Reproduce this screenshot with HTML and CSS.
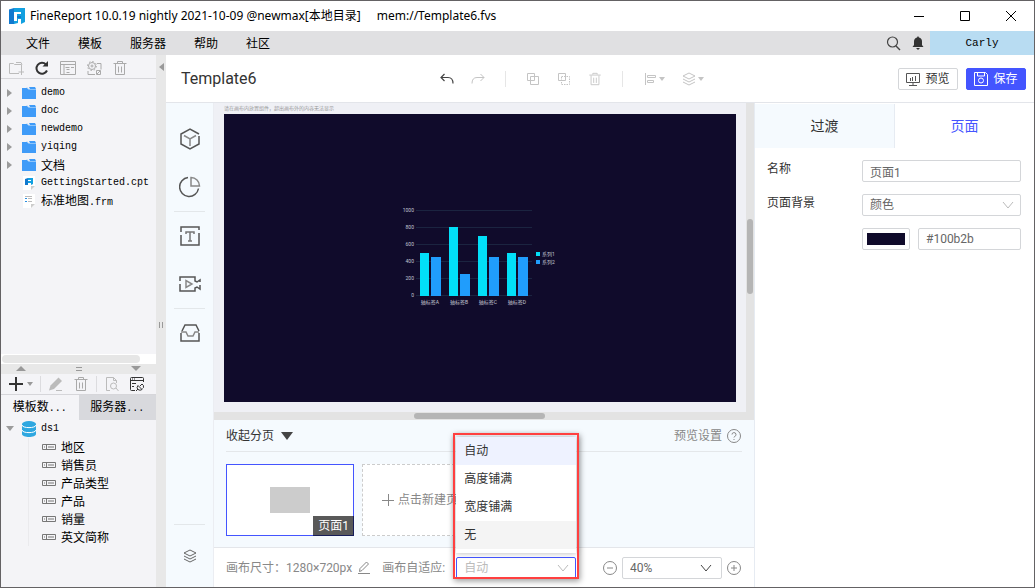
FILE: index.html
```html
<!DOCTYPE html>
<html lang="zh-CN">
<head>
    <meta charset="UTF-8">
    <meta name="viewport" content="width=device-width, initial-scale=1.0">
    <title>FineReport - Template6</title>
    <link rel="stylesheet" href="styles.css">
</head>
<body>
    <svg width="0" height="0" class="symbols" aria-hidden="true">
        <symbol id="folder" viewBox="0 0 14 12"><path d="M0 1h5l1 1h8v10H0z" fill="#3f9bf8"/><path d="M7 0h6l1 2H8z" fill="#3f9bf8"/><path d="M5 .5l1.500 2H14" fill="none" stroke="#8cc4fb"/></symbol>
        <symbol id="arrow" viewBox="0 0 5 8"><path d="M0 0l5 4-5 4z" fill="#9b9b9b"/></symbol>
        <symbol id="caret" viewBox="0 0 6 4"><path d="M0 0h6L3 4z" fill="currentColor"/></symbol>
        <symbol id="field" viewBox="0 0 14 6"><path d="M.5.5h13v5H.5zM4.500 .5v5M6 3h6M2 3h1" fill="none" stroke="#777"/></symbol>
        <symbol id="trash" viewBox="0 0 16 16"><path d="M1.500 3.500h13M5.500 3V1.500h5V3M3.500 4v10.500h9V4M6.500 6.500v6M9.500 6.500v6" fill="none" stroke="currentColor"/></symbol>
        <symbol id="layers" viewBox="0 0 14 14"><path d="M7 1l6 3-6 3-6-3zM1 7l6 3 6-3M1 10l6 3 6-3" fill="none" stroke="currentColor"/></symbol>
        <symbol id="chevron" viewBox="0 0 12 8"><path d="M1 1l5 6 5-6" fill="none" stroke="currentColor"/></symbol>
    </svg>
    <div class="window">
        <header class="titlebar">
            <svg class="logo" width="16" height="16" viewBox="0 0 16 16"><path d="M0 1.500L5 0v16H0z" fill="#1279cf"/><path d="M5 0h11v14l-4 2v-5H9v4l-4 1z" fill="#12a0e0"/><path d="M5 4h7v2H8v2h4v2H8v3H5z" fill="#fff"/><path d="M8 8h4v2H8z" fill="#1279cf"/></svg>
            <h1>FineReport 10.0.19 nightly 2021-10-09 @newmax[本地目录]</h1>
            <span class="path">mem://Template6.fvs</span>
            <div class="win-buttons">
                <button aria-label="最小化"><svg width="12" height="12"><path d="M1 6.500h10" stroke="#000"/></svg></button>
                <button aria-label="最大化"><svg width="12" height="12"><path d="M1.500 1.500h9v9h-9z" fill="none" stroke="#000"/></svg></button>
                <button aria-label="关闭"><svg width="12" height="12"><path d="M1 1l10 10M11 1L1 11" stroke="#000"/></svg></button>
            </div>
        </header>
        <nav class="menubar">
            <button>文件</button>
            <button>模板</button>
            <button>服务器</button>
            <button>帮助</button>
            <button>社区</button>
            <div class="menu-right">
                <button aria-label="搜索"><svg width="15" height="15" viewBox="0 0 15 15"><g fill="none" stroke="#444"><circle cx="6.500" cy="6" r="5" stroke-width="1.200"/><path d="M10 10l4 4" stroke-width="1.500"/></g></svg></button>
                <button aria-label="通知"><svg width="12" height="14" viewBox="0 0 12 14"><path d="M6 0l1 1.500c2 .5 3 2 3 4V9l1.500 2H.5L2 9V5.500c0-2 1-3.500 3-4zM4 12h4l-2 2z" fill="#333"/></svg></button>
                <button class="user">Carly</button>
            </div>
        </nav>

        <div class="workspace">
            <aside class="sidebar">
                <section class="files">
                    <div class="side-tools">
                        <button aria-label="新建文件夹"><svg width="16" height="16" viewBox="0 0 16 16"><path d="M11 13.500H1.500v-10h4l1 1h7V9M8 2.500h5l1 2M13.500 9v6M10.500 12h6" fill="none" stroke="#bbb"/></svg></button>
                        <button aria-label="刷新"><svg width="16" height="16" viewBox="0 0 16 16"><path d="M13 10.500A5.500 5.500 0 1 1 12 4.500" fill="none" stroke="#333" stroke-width="2"/><path d="M14 1v5.500H8.500z" fill="#333"/></svg></button>
                        <button aria-label="模板"><svg width="16" height="16" viewBox="0 0 16 16"><path d="M.5 1.500h15v13H.5zM.5 4.500h15M4 5v9M5.500 7.500h4M6.500 9.500h3M6.500 12.500h3M11 7.500h3" fill="none" stroke="#aaa"/></svg></button>
                        <button aria-label="设置"><svg width="16" height="16" viewBox="0 0 16 16"><g fill="none" stroke="#aaa"><circle cx="6" cy="6" r="3.500"/><circle cx="6" cy="6" r="4.500" stroke-dasharray="1.500 2"/><circle cx="6" cy="6" r="1"/><path d="M11 3.500h4v6M2 11v3.500h7M10.500 10.500h4v4h-4zM11 14l3-3"/></g></svg></button>
                        <button aria-label="删除" class="dim"><svg width="16" height="16"><use href="#trash"/></svg></button>
                    </div>
                    <ul class="tree">
                        <li><svg class="mark" width="5" height="8"><use href="#arrow"/></svg><svg width="14" height="12"><use href="#folder"/></svg>demo</li>
                        <li><svg class="mark" width="5" height="8"><use href="#arrow"/></svg><svg width="14" height="12"><use href="#folder"/></svg>doc</li>
                        <li><svg class="mark" width="5" height="8"><use href="#arrow"/></svg><svg width="14" height="12"><use href="#folder"/></svg>newdemo</li>
                        <li><svg class="mark" width="5" height="8"><use href="#arrow"/></svg><svg width="14" height="12"><use href="#folder"/></svg>yiqing</li>
                        <li><svg class="mark" width="5" height="8"><use href="#arrow"/></svg><svg width="14" height="12"><use href="#folder"/></svg><span class="cn">文档</span></li>
                        <li><i class="mark"></i><svg width="14" height="14" viewBox="0 0 14 14"><path d="M1 0h12v10l-4 4H1z" fill="#fff"/><path d="M13 10H9v4z" fill="#ccc"/><path d="M3 3l3-1v7H3z" fill="#1279cf"/><path d="M6 2h5v6l-2 1V7H6z" fill="#12a0e0"/><path d="M6 4h3v1H6z" fill="#fff"/></svg>GettingStarted.cpt</li>
                        <li><i class="mark"></i><svg width="14" height="14" viewBox="0 0 14 14"><path d="M1 0h12v10l-4 4H1z" fill="#fff"/><path d="M13 10H9v4z" fill="#ccc"/><path d="M3 2.500h7M6 4.500h4M6 7.500h4" stroke="#bbb"/><path d="M3 4h2v1H3zM3 7h2v1H3z" fill="#2a8fe0"/></svg><span><span class="cn">标准地图</span>.frm</span></li>
                    </ul>
                    <div class="side-scroll"><div class="side-thumb"></div></div>
                </section>
                <section class="datasets">
                    <div class="side-split">
                        <svg width="10" height="5"><path d="M0 5l5-5 5 5z" fill="#999"/></svg>
                        <svg width="6" height="4"><path d="M0 .5h6M0 3.500h6" stroke="#999"/></svg>
                        <svg width="10" height="5"><path d="M0 0h10L5 5z" fill="#999"/></svg>
                    </div>
                    <div class="side-tools data-tools">
                        <button class="add" aria-label="添加"><svg width="14" height="14"><path d="M7 0v14M0 7h14" stroke="#333" stroke-width="2"/></svg><svg width="6" height="4"><use href="#caret"/></svg></button>
                        <i class="sep"></i>
                        <button aria-label="编辑"><svg width="16" height="16" viewBox="0 0 16 16"><path d="M1 14.500l1.500-5L10.500 1.500l3.500 3.500-8 8z" fill="#bbb"/><path d="M8 14.500h6" stroke="#bbb"/></svg></button>
                        <button aria-label="删除" class="dim"><svg width="16" height="16"><use href="#trash"/></svg></button>
                        <i class="sep"></i>
                        <button aria-label="预览"><svg width="16" height="16" viewBox="0 0 16 16"><g fill="none" stroke="#bbb"><path d="M6 14.500H2.500v-13h7l3 3V7M9.500 1.500v3h3"/><circle cx="9.500" cy="10" r="3"/><path d="M12 12l2.500 3"/></g></svg></button>
                        <button aria-label="连接管理"><svg width="16" height="16" viewBox="0 0 16 16"><g fill="none" stroke="#333"><path d="M6 14.500H2.500q-1 0-1-1v-11q0-1 1-1h11q1 0 1 1V6M1.500 4.500h13M3 3h1M5 3h1M3 7.500h4M3 10.500h2"/><path d="M7 15l2-2M9 9.500l4 4q-2 1.500-4 0t0-4M11 10l2-2q2 1 1.500 3.500l-1 1"/></g></svg></button>
                    </div>
                    <div class="side-tabs">
                        <button class="active"><span>模板数<b>...</b></span></button>
                        <button><span>服务器<b>...</b></span></button>
                    </div>
                    <ul class="tree data-tree">
                        <li><svg class="mark" width="8" height="5" viewBox="0 0 8 5"><path d="M0 0h8L4 5z" fill="#9b9b9b"/></svg><svg width="14" height="16" viewBox="0 0 14 16"><path d="M0 3v10c0 4 14 4 14 0V3z" fill="#2ea7e0"/><ellipse cx="7" cy="3" rx="7" ry="3" fill="#2ea7e0"/><path d="M0 4c0 3.500 14 3.500 14 0M0 9c0 3.500 14 3.500 14 0" fill="none" stroke="#fff"/></svg>ds1</li>
                    </ul>
                    <ul class="tree columns">
                        <li><svg width="14" height="6"><use href="#field"/></svg><span class="cn">地区</span></li>
                        <li><svg width="14" height="6"><use href="#field"/></svg><span class="cn">销售员</span></li>
                        <li><svg width="14" height="6"><use href="#field"/></svg><span class="cn">产品类型</span></li>
                        <li><svg width="14" height="6"><use href="#field"/></svg><span class="cn">产品</span></li>
                        <li><svg width="14" height="6"><use href="#field"/></svg><span class="cn">销量</span></li>
                        <li><svg width="14" height="6"><use href="#field"/></svg><span class="cn">英文简称</span></li>
                    </ul>
                </section>
            </aside>
            <div class="splitter">
                <svg width="5" height="8"><path d="M5 0v8L0 4z" fill="#999"/></svg>
                <svg class="grip" width="4" height="6"><path d="M.5 0v6M3.500 0v6" stroke="#999"/></svg>
            </div>

            <main class="designer">
                <header class="designer-head">
                    <h2>Template6</h2>
                    <div class="tools">
                        <button class="on" aria-label="撤销"><svg width="16" height="16" viewBox="0 0 16 16"><path d="M5.500 3L2 6.500 5.500 10M2 6.500h7q5 0 5 6" fill="none" stroke="currentColor" stroke-width="1.200"/></svg></button>
                        <button aria-label="重做"><svg width="16" height="16" viewBox="0 0 16 16"><path d="M10.500 3L14 6.500 10.500 10M14 6.500H7q-5 0-5 6" fill="none" stroke="currentColor"/></svg></button>
                        <i class="sep"></i>
                        <button aria-label="复制"><svg width="16" height="16" viewBox="0 0 16 16"><path d="M2.500 2.500h7v7h-7zM5.500 5.500h8v8h-8z" fill="none" stroke="currentColor"/></svg></button>
                        <button aria-label="粘贴"><svg width="16" height="16" viewBox="0 0 16 16"><path d="M2.500 2.500h7v7h-7z" fill="none" stroke="currentColor"/><path d="M5.500 5.500h8v8h-8z" fill="none" stroke="currentColor" stroke-dasharray="1.500 1"/></svg></button>
                        <button aria-label="删除"><svg width="14" height="14"><use href="#trash"/></svg></button>
                        <i class="sep"></i>
                        <button class="wide" aria-label="对齐"><svg width="14" height="14" viewBox="0 0 14 14"><path d="M2.500 1v12M4.500 3.500h8v2h-8zM4.500 8.500h6v2h-6z" fill="none" stroke="currentColor"/></svg><svg width="6" height="4"><use href="#caret"/></svg></button>
                        <button class="wide" aria-label="层级"><svg width="14" height="14"><use href="#layers"/></svg><svg width="6" height="4"><use href="#caret"/></svg></button>
                    </div>
                    <div class="actions">
                        <button class="btn"><svg width="14" height="14" viewBox="0 0 14 14"><path d="M.5 1.500h13v9H.5zM7 11v2M3 13.500h8M4.500 6v3M6.500 5v4M9.500 4v5" fill="none" stroke="#555"/></svg>预览</button>
                        <button class="btn primary"><svg width="14" height="14" viewBox="0 0 14 14"><g fill="none" stroke="#fff"><path d="M.5.5h11l2 2v11H.5zM3.500 1v3h7V1"/><circle cx="7" cy="8.500" r="2.500"/></g></svg>保存</button>
                    </div>
                </header>

                <div class="designer-body">
                    <nav class="strip">
                        <button aria-label="组件"><svg width="22" height="22" viewBox="0 0 22 22"><g fill="none" stroke="#555" stroke-width="1.500"><path d="M20 8v8l-9 5-9-5V6l9-5 9 5"/><path d="M5 7.500l6 3.500 6-3.500M11 11v7" stroke="#888"/></g></svg></button>
                        <button aria-label="图表"><svg width="22" height="22" viewBox="0 0 22 22"><g fill="none" stroke-width="1.500"><path d="M9 1.500a9.500 9.500 0 1 0 10.500 11" stroke="#555"/><path d="M12 1.500V10h8.500A8.500 8.500 0 0 0 12 1.500z" stroke="#888"/></g></svg></button>
                        <i class="line"></i>
                        <button aria-label="文本"><svg width="22" height="22" viewBox="0 0 22 22"><g fill="none" stroke-width="1.500"><path d="M2 7V2h18v3M2 10v10h18V8" stroke="#555"/><path d="M7 9V7h8v2M11 7v9M9 16h4" stroke="#777"/></g></svg></button>
                        <button aria-label="媒体"><svg width="22" height="22" viewBox="0 0 22 22"><g fill="none" stroke-width="1.500"><path d="M1 8V4h15v4l2 1 3-2v2M1 11v7h15v-3l2-1 3 2v-4" stroke="#555"/><path d="M7 7.500v7l6-3.500z" stroke="#888"/></g></svg></button>
                        <i class="line"></i>
                        <button aria-label="资源"><svg width="22" height="22" viewBox="0 0 22 22"><g fill="none" stroke-width="1.500"><path d="M3 9l3-6h11l3 6M2 11v8h18v-8" stroke="#555"/><path d="M2 10h5l2 4h5l2-4h4" stroke="#888"/></g></svg></button>
                        <i class="line last"></i>
                        <button class="bottom" aria-label="图层"><svg width="14" height="14"><use href="#layers"/></svg></button>
                    </nav>

                    <section class="center">
                        <div class="viewport">
                            <div class="canvas">
                                <p class="hint">请在画布内放置组件，超出画布外的内容无法显示</p>
                                <svg class="stage" viewBox="0 0 512 288">
                                    <rect width="512" height="288" fill="#100b2b"/>
                                    <path d="M192 96.500h116M192 113.500h116M192 130.500h116M192 147.500h116M192 164.500h116M192 181.500h116" stroke="#1b2440"/>
                                    <g fill="#02dff8">
                                        <rect x="196" y="139" width="9" height="43"/>
                                        <rect x="225" y="113" width="9" height="69"/>
                                        <rect x="254" y="122" width="9" height="60"/>
                                        <rect x="283" y="139" width="9" height="43"/>
                                        <rect x="312" y="138" width="4" height="4"/>
                                    </g>
                                    <g fill="#209dfc">
                                        <rect x="207" y="143" width="10" height="39"/>
                                        <rect x="236" y="160" width="10" height="22"/>
                                        <rect x="265" y="143" width="10" height="39"/>
                                        <rect x="294" y="143" width="10" height="39"/>
                                        <rect x="312" y="146" width="4" height="4"/>
                                    </g>
                                    <g class="axis" text-anchor="end">
                                        <text x="190" y="98">1000</text>
                                        <text x="190" y="115">800</text>
                                        <text x="190" y="132">600</text>
                                        <text x="190" y="149">400</text>
                                        <text x="190" y="166">200</text>
                                        <text x="190" y="183">0</text>
                                    </g>
                                    <g class="axis" text-anchor="middle">
                                        <text x="206" y="190">轴标签A</text>
                                        <text x="235" y="190">轴标签B</text>
                                        <text x="264" y="190">轴标签C</text>
                                        <text x="293" y="190">轴标签D</text>
                                    </g>
                                    <g class="axis">
                                        <text x="318" y="142">系列1</text>
                                        <text x="318" y="150">系列2</text>
                                    </g>
                                </svg>
                            </div>
                            <div class="vscroll"><div class="vthumb"></div></div>
                        </div>
                        <div class="hscroll"><div class="hthumb"></div></div>

                        <div class="pages">
                            <div class="pages-head">
                                <button class="fold">收起分页 <svg width="12" height="8"><path d="M0 0h12L6 8z" fill="#444"/></svg></button>
                                <button class="setting">预览设置 <svg width="16" height="16" viewBox="0 0 16 16"><g fill="none" stroke="#888"><circle cx="8" cy="8" r="6.500"/><path d="M6 6.500a2 2 0 1 1 2.500 2L8 9.500M8 11v1"/></g></svg></button>
                            </div>
                            <div class="cards">
                                <button class="card current"><i class="thumb"></i><span class="tag">页面1</span></button>
                                <button class="card new"><svg width="12" height="12"><path d="M6.500 0v12M0 6.500h12" stroke="#888"/></svg>点击新建页面</button>
                            </div>
                        </div>

                        <footer class="status">
                            <span>画布尺寸：1280×720px</span>
                            <button class="edit" aria-label="编辑尺寸"><svg width="12" height="13" viewBox="0 0 12 13"><path d="M1.500 10.500l.5-3L8.500 1l2 2L4 9.500zM0 12.500h12" fill="none" stroke="#888"/></svg></button>
                            <label for="fit">画布自适应:</label>
                            <div class="select fit">
                                <select id="fit"><option>自动</option><option>高度铺满</option><option>宽度铺满</option><option>无</option></select>
                                <svg width="12" height="8"><use href="#chevron"/></svg>
                                <ul class="menu" role="listbox" aria-label="画布自适应">
                                    <li class="selected" role="option" aria-selected="true">自动</li>
                                    <li role="option">高度铺满</li>
                                    <li role="option">宽度铺满</li>
                                    <li class="hover" role="option">无</li>
                                </ul>
                                <div class="highlight"></div>
                            </div>
                            <div class="zoom">
                                <button aria-label="缩小"><svg width="16" height="16" viewBox="0 0 16 16"><g fill="none" stroke="#888"><circle cx="8" cy="8" r="6.500"/><path d="M5 8h6"/></g></svg></button>
                                <div class="select scale">
                                    <select aria-label="缩放比例"><option>40%</option></select>
                                    <svg width="12" height="8"><use href="#chevron"/></svg>
                                </div>
                                <button aria-label="放大"><svg width="16" height="16" viewBox="0 0 16 16"><g fill="none" stroke="#888"><circle cx="8" cy="8" r="6.500"/><path d="M5 8h6M8 5v6"/></g></svg></button>
                            </div>
                        </footer>
                    </section>

                    <aside class="props">
                        <div class="props-tabs">
                            <button>过渡</button>
                            <button class="active">页面</button>
                        </div>
                        <form class="props-form">
                            <label for="page-name">名称</label>
                            <input id="page-name" type="text" value="页面1">
                            <label for="page-bg">页面背景</label>
                            <div class="select">
                                <select id="page-bg"><option>颜色</option></select>
                                <svg width="12" height="8"><use href="#chevron"/></svg>
                            </div>
                            <div class="color-row">
                                <button type="button" class="swatch" aria-label="选择颜色"><i></i></button>
                                <input type="text" value="#100b2b" aria-label="颜色值">
                            </div>
                        </form>
                    </aside>
                </div>
            </main>
        </div>
    </div>
</body>
</html>
```
FILE: styles.css
```css
* {
    box-sizing: border-box;
}
body {
    margin: 0;
    font-family: Roboto, "Noto Sans CJK SC", sans-serif;
    font-size: 12px;
    line-height: 18px;
    color: #333;
}
h1, h2, p, ul {
    margin: 0;
    padding: 0;
    font-weight: normal;
}
ul {
    list-style: none;
}
button, input, select {
    font: inherit;
    color: inherit;
    margin: 0;
}
button {
    padding: 0;
    border: none;
    background: none;
    display: flex;
    align-items: center;
    justify-content: center;
    cursor: pointer;
    white-space: nowrap;
}
svg {
    display: block;
    flex: none;
}
.symbols {
    position: absolute;
}
.window {
    height: 100vh;
    display: flex;
    flex-direction: column;
    border: 1px solid #646264;
    background: #fff;
}

/* title bar and menu */
.titlebar {
    display: flex;
    align-items: center;
    height: 30px;
    padding: 0 17px 0 8px;
    font-family: "Noto Sans", "Noto Sans CJK SC", sans-serif;
    color: #000;
}
.titlebar h1 {
    font-size: 12px;
    margin: 0 16px 0 5px;
}
.win-buttons {
    display: flex;
    gap: 34px;
    margin-left: auto;
}
.menubar {
    display: flex;
    align-items: center;
    gap: 28px;
    height: 24px;
    padding-left: 25px;
    background: #e0e0e2;
    color: #000;
    font-family: "Noto Sans CJK SC", sans-serif;
}
.menu-right {
    display: flex;
    align-items: center;
    align-self: stretch;
    gap: 11px;
    margin-left: auto;
}
.user {
    align-self: stretch;
    width: 104px;
    margin-left: -5px;
    background: #b8dcf2;
    font-family: "Liberation Mono", monospace;
    font-size: 11px;
}
.workspace {
    flex: 1;
    display: flex;
    min-height: 0;
}

/* left side */
.sidebar {
    flex: 0 0 155px;
    display: flex;
    flex-direction: column;
    background: #f4f4f7;
    color: #000;
}
.files {
    flex: 1;
    display: flex;
    flex-direction: column;
    min-height: 0;
}
.side-tools {
    display: flex;
    align-items: center;
    gap: 10px;
    height: 24px;
    padding: 2px 7px 0;
    border-bottom: 1px solid #d6d6da;
    color: #999;
}
.dim {
    color: #aaa;
}
.tree {
    font-family: "Liberation Mono", "Noto Sans CJK SC", monospace;
    font-size: 10px;
}
.files .tree {
    flex: 1;
    padding-top: 5px;
    overflow: hidden;
}
.tree li {
    display: flex;
    align-items: center;
    gap: 5px;
    height: 18px;
    padding-left: 6px;
    white-space: nowrap;
}
.mark {
    width: 5px;
    margin-right: 5px;
}
.cn {
    font-family: "Noto Sans CJK SC", sans-serif;
    font-size: 12px;
}
.side-scroll {
    height: 10px;
    padding: 1px;
    background: #fff;
}
.side-thumb {
    width: 90%;
    height: 8px;
    border-radius: 4px;
    background: #e6e6e6;
}
.datasets {
    flex: 0 0 42%;
    min-height: 0;
    overflow: hidden;
}
.side-split {
    display: flex;
    align-items: center;
    justify-content: space-between;
    height: 10px;
    padding: 0 15px;
    background: #e8e8e8;
}
.data-tools {
    height: 21px;
    padding: 0 8px;
    gap: 9px;
}
.add {
    gap: 4px;
}
.sep {
    width: 1px;
    height: 16px;
    background: #dcdcdf;
}
.data-tools .sep {
    margin: 0 -2px;
}
.side-tabs {
    display: flex;
    height: 25px;
}
.side-tabs button {
    flex: 1;
    background: #d8d9dd;
    font-family: "Noto Sans CJK SC", sans-serif;
}
.side-tabs .active {
    background: #f4f4f7;
}
.side-tabs b {
    font-family: "Liberation Mono", monospace;
    font-size: 10px;
    font-weight: normal;
}
.data-tree .mark {
    width: 8px;
    margin-right: 3px;
}
.data-tree li {
    padding-left: 5px;
}
.columns {
    margin-left: 27px;
    border-left: 1px solid #eaeaed;
}
.columns li {
    padding-left: 13px;
}
.splitter {
    flex: 0 0 10px;
    display: flex;
    flex-direction: column;
    align-items: center;
    justify-content: space-between;
    padding: 8px 0;
    background: #e8e8e8;
}
.grip {
    margin: auto;
}

/* designer */
.designer {
    flex: 1;
    display: flex;
    flex-direction: column;
    min-width: 0;
}
.designer-head {
    display: flex;
    align-items: center;
    height: 48px;
    padding: 0 8px 0 15px;
    border-bottom: 1px solid #e3e5ea;
}
.designer-head h2 {
    flex: 0 0 258px;
    font-size: 16px;
    line-height: 24px;
}
.tools {
    display: flex;
    align-items: center;
    gap: 15px;
    color: #c4c4c4;
}
.tools button {
    width: 16px;
    height: 16px;
}
.tools .on {
    color: #444;
}
.tools .wide {
    width: 24px;
    gap: 2px;
}
.tools .sep {
    margin: 0 4px;
    background: #e6e6e6;
}
.actions {
    display: flex;
    gap: 8px;
    margin-left: auto;
}
.btn {
    width: 60px;
    height: 22px;
    gap: 5px;
    border: 1px solid #d4d6d9;
    border-radius: 2px;
}
.primary {
    border-color: #4455ff;
    background: #4455ff;
    color: #fff;
}
.designer-body {
    flex: 1;
    display: flex;
    min-height: 0;
}
.strip {
    flex: 0 0 47px;
    display: flex;
    flex-direction: column;
    align-items: center;
    padding-top: 12px;
    background: #f5fafe;
    color: #666;
}
.strip button {
    width: 47px;
    height: 48px;
}
.line {
    width: 31px;
    height: 1px;
    background: #e3e7ea;
}
.last {
    margin-top: auto;
}
.strip .bottom {
    height: 62px;
}
.center {
    flex: 1;
    display: flex;
    flex-direction: column;
    min-width: 0;
    border-left: 1px solid #ebedf2;
}
.viewport {
    flex: 1;
    display: flex;
    min-height: 0;
}
.canvas {
    flex: 1;
    padding-left: 10px;
    background: #eff0f5;
    overflow: hidden;
}
.hint {
    height: 11px;
    font-size: 5px;
    line-height: 11px;
    color: #999;
}
.stage {
    width: 512px;
    height: 288px;
}
.axis {
    font-size: 5px;
    fill: #c4c6d4;
}
.vscroll {
    width: 8px;
    padding: 116px 1px 0;
    background: #e3e3e3;
}
.vthumb {
    height: 75px;
    border-radius: 3px;
    background: #b5b5b5;
}
.hscroll {
    height: 8px;
    padding: 1px 8px 1px 200px;
    background: #e3e3e3;
}
.hthumb {
    width: 131px;
    height: 6px;
    border-radius: 3px;
    background: #b5b5b5;
}

/* page list under the canvas */
.pages {
    padding: 0 12px 11px;
    background: #f5fafe;
}
.pages-head {
    display: flex;
    justify-content: space-between;
    height: 32px;
    border-bottom: 1px solid #e4e7ea;
}
.fold {
    gap: 7px;
}
.setting {
    gap: 4px;
    color: #888;
}
.cards {
    display: flex;
    gap: 8px;
    padding-top: 12px;
}
.card {
    position: relative;
    width: 128px;
    height: 72px;
    background: #fff;
}
.current {
    border: 1px solid #4455ff;
}
.thumb {
    width: 40px;
    height: 26px;
    background: #ccc;
}
.tag {
    position: absolute;
    right: -1px;
    bottom: -1px;
    padding: 1px 5px;
    background: rgba(0, 0, 0, 0.65);
    color: #fff;
}
.new {
    gap: 4px;
    border: 1px dashed #ccc;
    color: #888;
}
.status {
    display: flex;
    align-items: center;
    height: 40px;
    padding: 0 12px;
    border-top: 1px solid #e4e6ea;
    color: #888;
    white-space: nowrap;
}
.edit {
    margin: 0 12px 0 6px;
}
.select {
    position: relative;
    color: #666;
}
.select select {
    width: 100%;
    height: 22px;
    padding: 0 7px;
    border: 1px solid #d4d6d9;
    border-radius: 2px;
    background: #fff;
    appearance: none;
}
.select > svg {
    position: absolute;
    right: 7px;
    top: 7px;
    color: #bbb;
    pointer-events: none;
}
.fit {
    width: 120px;
    margin-left: 11px;
}
.fit select {
    border-color: #4455ff;
    color: #bbb;
}
.menu {
    position: absolute;
    left: 0;
    right: 0;
    bottom: 26px;
    padding-bottom: 4px;
    background: #fff;
    box-shadow: 0 0 6px rgba(0, 0, 0, 0.3);
    color: #333;
}
.menu li {
    padding: 5px 8px;
}
.menu .selected {
    background: #eef2ff;
}
.menu .hover {
    background: #f4f4f4;
}
.highlight {
    position: absolute;
    left: -3px;
    right: -3px;
    top: -124px;
    bottom: 0;
    border: 2px solid #ff4040;
    box-shadow: 1px 2px 6px rgba(0, 0, 0, 0.4);
    pointer-events: none;
}
.zoom {
    display: flex;
    align-items: center;
    gap: 4px;
    margin-left: auto;
}
.scale {
    width: 100px;
}
.scale > svg {
    right: 10px;
    color: #444;
}

/* properties */
.props {
    flex: 0 0 280px;
    padding-top: 1px;
    border-left: 1px solid #e6ebf2;
}
.props-tabs {
    display: flex;
    height: 44px;
    font-size: 14px;
}
.props-tabs button {
    flex: 1;
    background: #f5fafe;
}
.props-tabs .active {
    border-left: 1px solid #e6ebf2;
    background: #fff;
    color: #4455ff;
}
.props-form {
    display: grid;
    grid-template-columns: 83px 1fr;
    gap: 12px;
    padding: 12px 13px 12px 12px;
}
.props-form input {
    width: 100%;
    min-width: 0;
    height: 22px;
    padding: 0 7px;
    border: 1px solid #d4d6d9;
    border-radius: 2px;
    color: #666;
}
.color-row {
    grid-column: 2;
    display: flex;
    gap: 8px;
}
.swatch {
    flex: 0 0 48px;
    height: 22px;
    border: 1px solid #d4d6d9;
    border-radius: 2px;
}
.swatch i {
    width: 38px;
    height: 12px;
    background: #100b2b;
}
```
